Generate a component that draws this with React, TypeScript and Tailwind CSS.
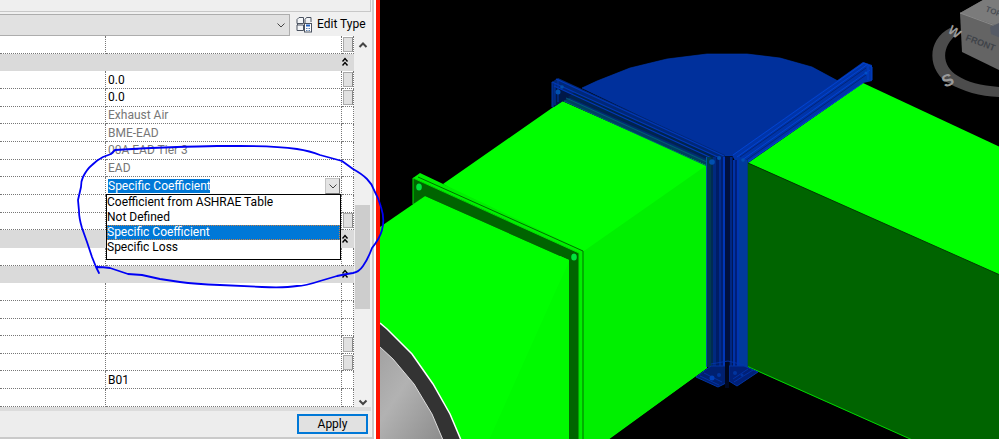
import { useState } from "react";

type Row = {
  kind?: "group" | "select";
  value?: string;
  readOnly?: boolean;
  picker?: boolean;
};

const OPTIONS = [
  "Coefficient from ASHRAE Table",
  "Not Defined",
  "Specific Coefficient",
  "Specific Loss",
];

const ROWS: Row[] = [
  { picker: true },
  { kind: "group" },
  { value: "0.0", picker: true },
  { value: "0.0", picker: true },
  { value: "Exhaust Air", readOnly: true },
  { value: "BME-EAD", readOnly: true },
  { value: "00A EAD Tier 3", readOnly: true },
  { value: "EAD", readOnly: true },
  { kind: "select" },
  {},
  { picker: true },
  { kind: "group" },
  {},
  { kind: "group" },
  {},
  {},
  {},
  { picker: true },
  { picker: true },
  { value: "B01" },
  {},
];

function Chevron({ up, className }: { up?: boolean; className?: string }) {
  return (
    <svg viewBox="0 0 10 10" className={className} fill="none" stroke="currentColor" aria-hidden="true">
      <path d={up ? "M1.5 7 5 3.5 8.500 7" : "M1.5 3.500 5 7 8.500 3.500"} />
    </svg>
  );
}

function EditTypeIcon() {
  return (
    <svg viewBox="0 0 17 17" className="h-[17px] w-[17px] shrink-0" fill="none" stroke="#4a5260" aria-hidden="true">
      <path d="M1 3.500 3 1.500H7.500V7.500H1ZM9 3.500 10.500 1.500H15V6M9 3.500V7M1 9H7.500V14.500H1ZM1 9 2.500 7.500" fill="#f4f6f8" />
      <rect x="8.500" y="7.500" width="7" height="8.500" fill="#fff" />
      <path d="M10 9.500H14" stroke="#1f5fbf" strokeWidth="2" />
      <path d="M10 12.500H14M10 14.500H14" stroke="#5d7fae" strokeDasharray="1 .5" />
    </svg>
  );
}

function MethodSelect() {
  const [method, setMethod] = useState("Specific Coefficient");
  return (
    <div className="relative flex h-4 items-center justify-between">
      <select
        aria-label="Loss method"
        value={method}
        onChange={(e) => setMethod(e.target.value)}
        className="ml-[2px] h-[14px] w-[102px] appearance-none bg-[#0078d7] leading-[14px] text-white outline-none"
      >
        {OPTIONS.map((o) => <option key={o}>{o}</option>)}
      </select>
      <button
        type="button"
        aria-label="Open list"
        className="mr-[1px] flex h-4 w-[15px] items-center justify-center border border-[#c4c4c4] border-r-[#777] border-b-[#777] bg-[#e4e4e4] text-[#444]"
      >
        <Chevron className="h-[10px] w-[10px]" />
      </button>
      <ul role="listbox" aria-label="Loss method" className="absolute top-full right-0 left-0 z-10 border border-black bg-white pb-1">
        {OPTIONS.map((o) => (
          <li
            key={o}
            role="option"
            aria-selected={o === method}
            onClick={() => setMethod(o)}
            className={o === method
              ? "h-[15px] bg-[#0078d7] leading-[15px] text-white outline-1 -outline-offset-1 outline-dotted outline-[#c98044]"
              : "h-[15px] leading-[15px]"}
          >
            {o}
          </li>
        ))}
      </ul>
    </div>
  );
}

function PropertyRow({ row }: { row: Row }) {
  if (row.kind === "group") {
    return (
      <tr className="bg-[#dadada]">
        <td colSpan={2} className="p-0" />
        <td className="p-0">
          <button type="button" aria-label="Collapse group" className="flex h-[17px] w-[11px] items-center">
            <svg viewBox="0 0 11 12" className="h-3 w-[11px]" fill="none" stroke="#000" strokeWidth="1.4" aria-hidden="true">
              <path d="M.5 5.500 3 2.500 5.500 5.500M.5 9.500 3 6.500 5.500 9.500" />
            </svg>
          </button>
        </td>
      </tr>
    );
  }
  return (
    <tr>
      <td className="border-r border-b border-dotted border-[#777] p-0" />
      <td className="border-r border-b border-dotted border-[#777] p-0">
        {row.kind === "select"
          ? <MethodSelect />
          : <div className={row.readOnly ? "h-4 pl-[2px] leading-4 text-[#777]" : "h-4 pl-[2px] leading-4"}>{row.value}</div>}
      </td>
      <td className="border-r border-b border-dotted border-[#777] p-0">
        {row.picker && (
          <button type="button" aria-label="Browse" className="ml-[1px] block h-[15px] w-[10px] border border-[#aaa] border-r-[#888] bg-[#e1e1e1]" />
        )}
      </td>
    </tr>
  );
}

function PropertiesPanel() {
  return (
    <section className="flex w-[376px] shrink-0 flex-col border-r-2 border-white bg-[#f0f0f0]">
      <div className="flex min-h-0 flex-1 flex-col border-r-2 border-b-2 border-[#cacaca] pr-[1px]">
        <div className="h-3 shrink-0 border-r border-b border-[#c8c8c8] bg-[#efefef]" />
        <div className="flex h-6 shrink-0 items-center">
          <button type="button" aria-label="Type selector" className="mt-[1px] flex h-[22px] w-[290px] items-center justify-end border border-l-0 border-[#adadad] bg-[#e1e1e1] pr-[3px] text-[#444]">
            <Chevron className="h-[10px] w-[10px]" />
          </button>
          <button type="button" className="ml-[6px] flex items-center gap-1 whitespace-nowrap">
            <EditTypeIcon />
            Edit Type
          </button>
        </div>
        <div className="flex min-h-0 flex-1">
          <table className="h-full min-w-0 flex-1 table-fixed border-separate border-spacing-0 bg-white">
            <colgroup>
              <col className="w-[106px]" />
              <col />
              <col className="w-3" />
            </colgroup>
            <tbody>
              {ROWS.map((row, i) => <PropertyRow key={i} row={row} />)}
            </tbody>
          </table>
          <div className="flex w-[17px] shrink-0 flex-col items-center text-[#444]">
            <Chevron up className="mt-1 h-[10px] w-[10px] stroke-2" />
            <div className="mt-[155px] h-[104px] w-[15px] bg-[#cdcdcd]" />
            <Chevron className="mt-auto h-[10px] w-[10px] stroke-2" />
          </div>
        </div>
        <div className="flex h-[30px] shrink-0 items-center justify-end border-t-4 border-[#dcdcdc] bg-[#ededed] pr-[3px]">
          <button type="button" className="h-5 w-[71px] border-2 border-[#0078d7] bg-[#e1e1e1] leading-4">
            Apply
          </button>
        </div>
      </div>
    </section>
  );
}

function ViewCube() {
  return (
    <g>
      <path d="M950 28C926 40 927 72 950 84 963 91 981 97 1001 97V87C982 86 967 82 958 76 940 65 942 46 957 34Z" fill="#4c4c4c" />
      <path d="M960 13 983 0H1001V71L962 52Z" fill="#646464" />
      <path d="M960 13 983 0H1001V27Z" fill="#7b7b7b" />
      <path d="M960 13 1001 28" stroke="#8a8a8a" fill="none" />
      <path d="M990 27 1001 22V38L991 34Z" fill="#565b66" />
      <g fontFamily="Liberation Sans, sans-serif" fontWeight="700">
        <text x="965" y="40" fontSize="9" fill="#3f4349" transform="rotate(21 965 40)">FRONT</text>
        <text x="985" y="11" fontSize="8" fill="#4a4e55" transform="rotate(22 985 11)">TOP</text>
        <text x="947" y="32" fontSize="13" fill="#9a9a9a" transform="rotate(35 947 32)">W</text>
        <text x="945" y="88" fontSize="17" fill="#9a9a9a" transform="rotate(-25 945 88)">S</text>
      </g>
    </g>
  );
}

// Vertical seams of the two elbow flanges, left to right: [x, width, colour]
const SEAMS: [number, number, string][] = [
  [706, 1, "#0058a0"],
  [707, 4, "#003c50"],
  [711, 2, "#002c52"],
  [713, 3, "#002a80"],
  [716, 3, "#001d66"],
  [719, 2, "#002a8c"],
  [721, 2, "#001f70"],
  [723, 2, "#0036b8"],
  [725, 5, "#001040"],
  [730, 2, "#002884"],
  [732, 1, "#001858"],
  [733, 2, "#0032a8"],
  [735, 2, "#001f78"],
  [737, 2, "#0034b0"],
  [739, 8, "#003a9c"],
  [747, 1, "#004070"],
];

function DuctView() {
  return (
    <svg viewBox="380 0 619 439" preserveAspectRatio="xMinYMin slice" className="h-full min-w-0 flex-1 bg-black" role="img" aria-label="3D duct view">
      <defs>
        <linearGradient id="disc" x1="0" y1="0" x2="1" y2="1">
          <stop offset="0" stopColor="#a2a2a2" />
          <stop offset=".4" stopColor="#b2b2b2" />
          <stop offset="1" stopColor="#8c8c8c" />
        </linearGradient>
      </defs>

      {/* right-hand duct */}
      <path d="M748 163 863 83 1000 147V276Z" fill="#0f0" />
      <path d="M748 163 1000 275V479L748 367Z" fill="#006400" />
      <path d="M748 163 1000 275" stroke="#003c00" fill="none" />
      <path d="M742 364 1000 479" stroke="#00d800" fill="none" />

      {/* middle duct */}
      <path d="M443 184 562 101 707 165V368L608 440H560V250Z" fill="#0f0" />
      <path d="M707 165 584 251V440H607L707 368Z" fill="#00f000" />

      {/* elbow */}
      <path d="M582 88 597 81 630 68 667 59 707 54H747L780 58 812 67 838 81 735 156H724Z" fill="#00309c" stroke="#003ab4" strokeWidth=".6" />

      {/* left elbow flange */}
      <path d="M552 82 558 78 725 155V165H707L563 101 552 108Z" fill="#002878" />
      <path d="M563 96 710 162 707 165 563 101 570 97Z" fill="#004060" />
      <path d="M555 87 575 95 563 101 554 107Z" fill="#001848" />
      <path d="M575 92 715 156 711 161 568 97Z" fill="#00244e" />
      <path d="M556 79 724 156M552 82 720 158M554 86 716 160" stroke="#0038b8" strokeWidth="1.3" fill="none" />
      <path d="M566 98 709 163M564 101 707 166" stroke="#005a78" fill="none" />
      <path d="M552 82V107M555 84V105M558 79V102" stroke="#0036a8" fill="none" />

      {/* right elbow flange */}
      <path d="M732 155 863 62 872 65V81L863 83 748 163H736Z" fill="#0034a8" />
      <path d="M733 155 864 63M737 157 868 64M742 160 870 70M746 163 863 83" stroke="#0044d0" fill="none" />
      <path d="M740 157 866 68M745 161 866 75" stroke="#00267c" fill="none" />
      <path d="M864 63 872 67V80M868 66V80" stroke="#0040c8" fill="none" />
      <circle cx="866" cy="73" r="1.500" fill="#0050c8" />

      {/* flange seams and foot plates */}
      {SEAMS.map(([x, w, fill]) => (
        <rect key={x} x={x} y={x > 732 ? 160 : 157} width={w} height={x > 738 ? 208 : 210} fill={fill} />
      ))}
      <path d="M696 377 711 366H726V383L718 387Z" fill="#002070" stroke="#0034a4" />
      <path d="M729 366H744L758 372 737 386 729 381Z" fill="#002078" stroke="#0034a4" />
      <path d="M700 376 719 385M704 373 722 382M734 382 753 370M733 379 748 369M711 364 728 361 744 365" stroke="#0036b0" strokeWidth=".8" fill="none" />
      <circle cx="712" cy="378" r="2.500" fill="#0040b8" />
      <circle cx="719" cy="375" r="2" fill="#0034a0" />
      <circle cx="735" cy="373" r="2" fill="#0034a0" />
      <circle cx="742" cy="375" r="1.500" fill="#0034a0" />
      <path d="M725 362H729V388H725Z" fill="#000820" />
      <g fill="#0050b0">
        <circle cx="558" cy="92" r="2.500" />
        <circle cx="562" cy="87" r="1.800" />
        <circle cx="712" cy="162" r="2.800" />
        <circle cx="719" cy="158" r="2" />
        <circle cx="743" cy="160" r="1.800" />
      </g>

      {/* transition and its flange */}
      <path d="M413 178 420 173 584 251V440H579V253Z" fill="#00f000" />
      <path d="M413 178 579 253V440H569V260L425 196 413 205Z" fill="#006400" />
      <path d="M380 227 425 196 569 260V440H380Z" fill="#0f0" />
      <path d="M556 290 569 262V440H489Z" fill="#00fa00" />
      <path d="M413 204V178L579 253V440" stroke="#00e000" fill="none" />
      <path d="M418 177 583 251V440" stroke="#007000" fill="none" />
      <g fill="#00e43c">
        <ellipse cx="419" cy="187" rx="2.800" ry="3.500" />
        <ellipse cx="574" cy="257" rx="2.800" ry="3.500" />
      </g>

      {/* round end */}
      <path d="M380 323 387 329 412 354 433 384 450 414 461 440H380Z" fill="#333" />
      <path d="M380 323 387 329 412 354 433 384 450 414 461 440" stroke="#fff" strokeWidth="1.500" fill="none" />
      <path d="M380 347 393 359 414 384 432 414 443 440H380Z" fill="url(#disc)" />
      <path d="M380 347 393 359 414 384 432 414 443 440" stroke="#ddd" fill="none" />

      <ViewCube />
    </svg>
  );
}

// Freehand pen mark round the open list
function InkMark() {
  return (
    <svg viewBox="0 0 400 300" className="pointer-events-none absolute top-0 left-0 z-20 h-[300px] w-[400px]" fill="none" stroke="#0000f5" strokeWidth="1.800" strokeLinecap="round" strokeLinejoin="round" aria-hidden="true">
      <path d="M99 273 96 267 92 257 87 242 82 228Q79 218 79 211L78 200 81 187Q81 181 83 177 87 169 92 165 97 160 103 157L111 154 115 150Q145 148 177 147T217 146H240Q275 146 297 149 310 151 320 155L342 161 353 169Q362 174 367 179 372 184 374 190 379 199 381 207 385 219 382 230 380 238 372 248 368 259 363 266 359 272 353 273 346 274 337 276L320 281Q305 286 297 286 285 288 262 287L220 285Q195 284 180 282L160 279 142 275 128 274 110 268Q103 267 97 267" />
    </svg>
  );
}

export default function App() {
  return (
    <main className="relative flex h-screen overflow-hidden bg-black font-[Roboto,'Noto_Sans',sans-serif] text-[12px] text-black">
      <PropertiesPanel />
      <div className="w-1 shrink-0 bg-[#ff1200]" />
      <DuctView />
      <InkMark />
    </main>
  );
}
